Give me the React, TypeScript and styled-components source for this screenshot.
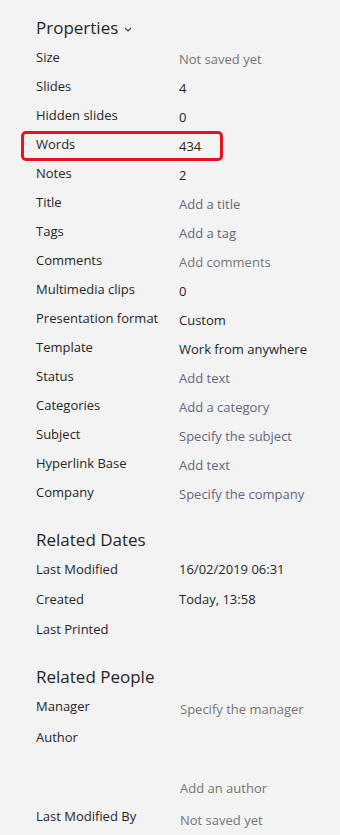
import styled, { createGlobalStyle } from "styled-components";

const GlobalStyle = createGlobalStyle`
  body {
    margin: 0;
    background: #f3f3f3;
    font-family: "Open Sans", "Noto Sans", sans-serif;
    color: #262626;
  }
`;

const Page = styled.div`
  width: 340px;
  height: 835px;
  overflow: hidden;
  padding: 16px 0 0 36px;
  box-sizing: border-box;
`;

const Section = styled.section<{ $gap?: number }>`
  margin-top: ${(p) => p.$gap ?? 0}px;
`;

const Heading = styled.h2`
  margin: 0 0 8px;
  height: 24px;
  font-size: 17px;
  font-weight: 400;
  line-height: 24px;
  display: flex;
  align-items: center;
  gap: 6px;
  color: #262626;
`;

const Row = styled.div<{ $h?: number; $drop?: number; $end?: boolean }>`
  display: grid;
  grid-template-columns: 143px 1fr;
  height: ${(p) => p.$h ?? 29}px;
  font-size: 13px;
  line-height: 18px;
  box-sizing: border-box;

  & > span:last-child {
    padding-top: ${(p) => p.$drop ?? 2}px;
    align-self: ${(p) => (p.$end ? "end" : "start")};
    margin-bottom: ${(p) => (p.$end ? 10 : 0)}px;
  }
`;

const Marked = styled(Row)`
  width: 202px;
  height: 30px;
  margin: -4px 0 3px -15px;
  padding: 1px 0 0 12px;
  border: 3px solid #e8121a;
  border-radius: 5px;
`;

const Label = styled.span`
  color: #262626;
  white-space: nowrap;
`;

const Value = styled.span<{ $kind?: "text" | "muted" | "prompt" }>`
  white-space: nowrap;
  color: ${(p) =>
    p.$kind === "prompt" ? "#66667e" : p.$kind === "muted" ? "#767676" : "#262626"};
`;

const PersonValue = styled(Value)`
  margin-left: 1px;
`;

const Chevron = () => (
  <svg width="8" height="5" viewBox="0 0 8 5" style={{ marginTop: 2 }}>
    <path d="M1 1l3 3 3-3" fill="none" stroke="#444" strokeWidth="1.2" />
  </svg>
);

type Item = [string, string, ("text" | "muted" | "prompt")?];

const props: Item[] = [
  ["Size", "Not saved yet", "muted"],
  ["Slides", "4"],
  ["Hidden slides", "0"],
  ["Words", "434"],
  ["Notes", "2"],
  ["Title", "Add a title", "prompt"],
  ["Tags", "Add a tag", "prompt"],
  ["Comments", "Add comments", "muted"],
  ["Multimedia clips", "0"],
  ["Presentation format", "Custom"],
  ["Template", "Work from anywhere"],
  ["Status", "Add text", "prompt"],
  ["Categories", "Add a category", "prompt"],
  ["Subject", "Specify the subject", "prompt"],
  ["Hyperlink Base", "Add text", "prompt"],
  ["Company", "Specify the company", "prompt"],
];

const dates: Item[] = [
  ["Last Modified", "16/02/2019 06:31"],
  ["Created", "Today, 13:58"],
  ["Last Printed", ""],
];

export default function App() {
  return (
    <Page>
      <GlobalStyle />
      <Section>
        <Heading>
          Properties <Chevron />
        </Heading>
        {props.map(([label, value, kind]) => {
          const R = label === "Words" ? Marked : Row;
          return (
            <R key={label}>
              <Label>{label}</Label>
              <Value $kind={kind}>{value}</Value>
            </R>
          );
        })}
      </Section>

      <Section $gap={16}>
        <Heading>Related Dates</Heading>
        {dates.map(([label, value]) => (
          <Row key={label} $h={30} $drop={0}>
            <Label>{label}</Label>
            <Value>{value}</Value>
          </Row>
        ))}
      </Section>

      <Section $gap={15}>
        <Heading>Related People</Heading>
        <Row $h={31} $drop={3}>
          <Label>Manager</Label>
          <PersonValue $kind="muted">Specify the manager</PersonValue>
        </Row>
        <Row $h={79} $end $drop={0}>
          <Label>Author</Label>
          <PersonValue $kind="muted">Add an author</PersonValue>
        </Row>
        <Row $h={32} $drop={4}>
          <Label>Last Modified By</Label>
          <PersonValue $kind="muted">Not saved yet</PersonValue>
        </Row>
      </Section>
    </Page>
  );
}
